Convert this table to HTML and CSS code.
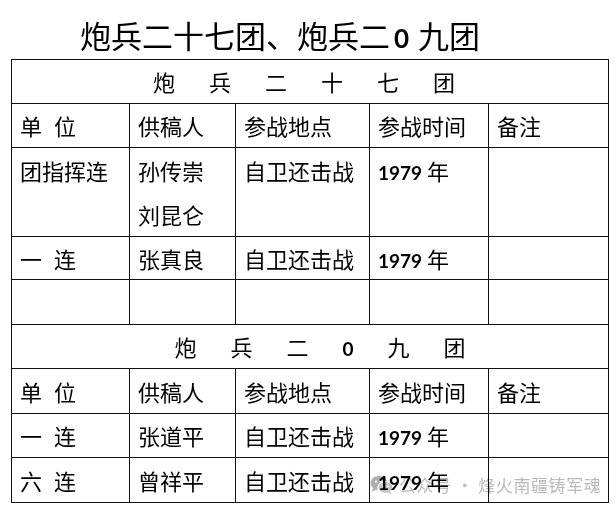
FILE: index.html
```html
<!DOCTYPE html>
<html lang="zh-CN">
<head>
<meta charset="utf-8">
<title>炮兵二十七团、炮兵二0九团</title>
<link rel="stylesheet" href="styles.css">
</head>
<body>
<div class="page">
  <h1 class="title">炮兵二十七团、炮兵二<span class="title-num">0</span>九团</h1>
  <table class="roster">
    <colgroup>
      <col class="col-unit">
      <col class="col-author">
      <col class="col-place">
      <col class="col-time">
      <col class="col-note">
    </colgroup>
    <tbody>
      <tr class="row">
        <td colspan="5" class="section">
          <div class="spread spread-a"><span>炮</span><span>兵</span><span>二</span><span>十</span><span>七</span><span>团</span></div>
        </td>
      </tr>
      <tr class="row">
        <td><span class="sp">单</span>位</td><td>供稿人</td><td>参战地点</td><td>参战时间</td><td>备注</td>
      </tr>
      <tr class="row row-double">
        <td>团指挥连</td><td>孙传崇<br>刘昆仑</td><td>自卫还击战</td><td><span class="year">1979</span> 年</td><td></td>
      </tr>
      <tr class="row row-short">
        <td><span class="sp">一</span>连</td><td>张真良</td><td>自卫还击战</td><td><span class="year">1979</span> 年</td><td></td>
      </tr>
      <tr class="row row-tall">
        <td></td><td></td><td></td><td></td><td></td>
      </tr>
      <tr class="row">
        <td colspan="5" class="section">
          <div class="spread spread-b"><span>炮</span><span>兵</span><span>二</span><span class="year">0</span><span>九</span><span>团</span></div>
        </td>
      </tr>
      <tr class="row row-tall">
        <td><span class="sp">单</span>位</td><td>供稿人</td><td>参战地点</td><td>参战时间</td><td>备注</td>
      </tr>
      <tr class="row">
        <td><span class="sp">一</span>连</td><td>张道平</td><td>自卫还击战</td><td><span class="year">1979</span> 年</td><td></td>
      </tr>
      <tr class="row row-tall">
        <td><span class="sp">六</span>连</td><td>曾祥平</td><td>自卫还击战</td><td><span class="year">1979</span> 年</td><td></td>
      </tr>
    </tbody>
  </table>
  <div class="watermark">
    <svg class="wm-icon" width="24" height="20" viewBox="0 0 24 20" aria-hidden="true">
      <ellipse cx="9" cy="8" rx="8.5" ry="7" fill="#9a9a9a"/>
      <path d="M3 13 L2 17 L6.5 14.2 Z" fill="#9a9a9a"/>
      <ellipse cx="15.5" cy="12.5" rx="7.5" ry="6" fill="#b4b4b4" stroke="#fff" stroke-width="1.2"/>
      <path d="M20 17 L21.5 19.5 L17.5 18 Z" fill="#b4b4b4"/>
      <circle cx="6" cy="6.5" r="1.1" fill="#fff"/>
      <circle cx="11.5" cy="6.5" r="1.1" fill="#fff"/>
      <circle cx="13" cy="11.5" r="0.9" fill="#fff"/>
      <circle cx="18" cy="11.5" r="0.9" fill="#fff"/>
    </svg>
    <span class="wm-text">公众号 · 烽火南疆铸军魂</span>
  </div>
</div>
</body>
</html>
```

FILE: styles.css
```css
html, body {
  margin: 0;
  padding: 0;
  background: #ffffff;
}

body {
  font-family: "Noto Sans CJK SC", "Noto Sans", sans-serif;
  color: #000;
}

.page {
  position: relative;
  width: 615px;
  height: 510px;
  overflow: hidden;
}

.title {
  margin: 0;
  padding: 19px 0 0 80px;
  height: 59px;
  box-sizing: border-box;
  font-size: 31px;
  line-height: 31px;
  font-weight: 400;
  white-space: nowrap;
}

.title-num {
  font-family: Lato, "Liberation Sans", sans-serif;
  font-weight: 700;
  font-size: 26px;
  line-height: 1;
  margin: 0 9px 0 4px;
}

.roster {
  margin-left: 11px;
  width: 597px;
  border-collapse: collapse;
  table-layout: fixed;
}

.col-unit { width: 118px; }
.col-author { width: 106px; }
.col-place { width: 134px; }
.col-time { width: 119px; }
.col-note { width: 120px; }

.roster td {
  border: 1px solid #111;
  padding: 0 0 0 8px;
  font-size: 22px;
  line-height: 43px;
  height: 43px;
  vertical-align: top;
  white-space: nowrap;
  overflow: hidden;
}

.row-tall td {
  line-height: 44px;
  height: 44px;
}

.row-short td {
  line-height: 42px;
  height: 42px;
}

.row-double td {
  line-height: 44px;
  height: 88px;
}

.sp {
  margin-right: 12px;
}

.year {
  font-family: Lato, "Liberation Sans", sans-serif;
  font-weight: 700;
  font-size: 19px;
  line-height: 1;
}

.roster td.section {
  padding: 0;
}

.spread {
  display: flex;
  justify-content: center;
  align-items: baseline;
  gap: 34px;
  height: 43px;
}

.spread-a {
  padding-right: 12px;
}

.spread-b {
  padding-left: 20px;
}

.watermark {
  position: absolute;
  left: 370px;
  top: 474px;
  display: flex;
  align-items: center;
  gap: 5px;
  opacity: 0.8;
  mix-blend-mode: multiply;
}

.wm-icon {
  display: block;
}

.wm-text {
  font-size: 17px;
  line-height: 22px;
  color: #a8a8a8;
  letter-spacing: 0.6px;
  white-space: nowrap;
}
```
